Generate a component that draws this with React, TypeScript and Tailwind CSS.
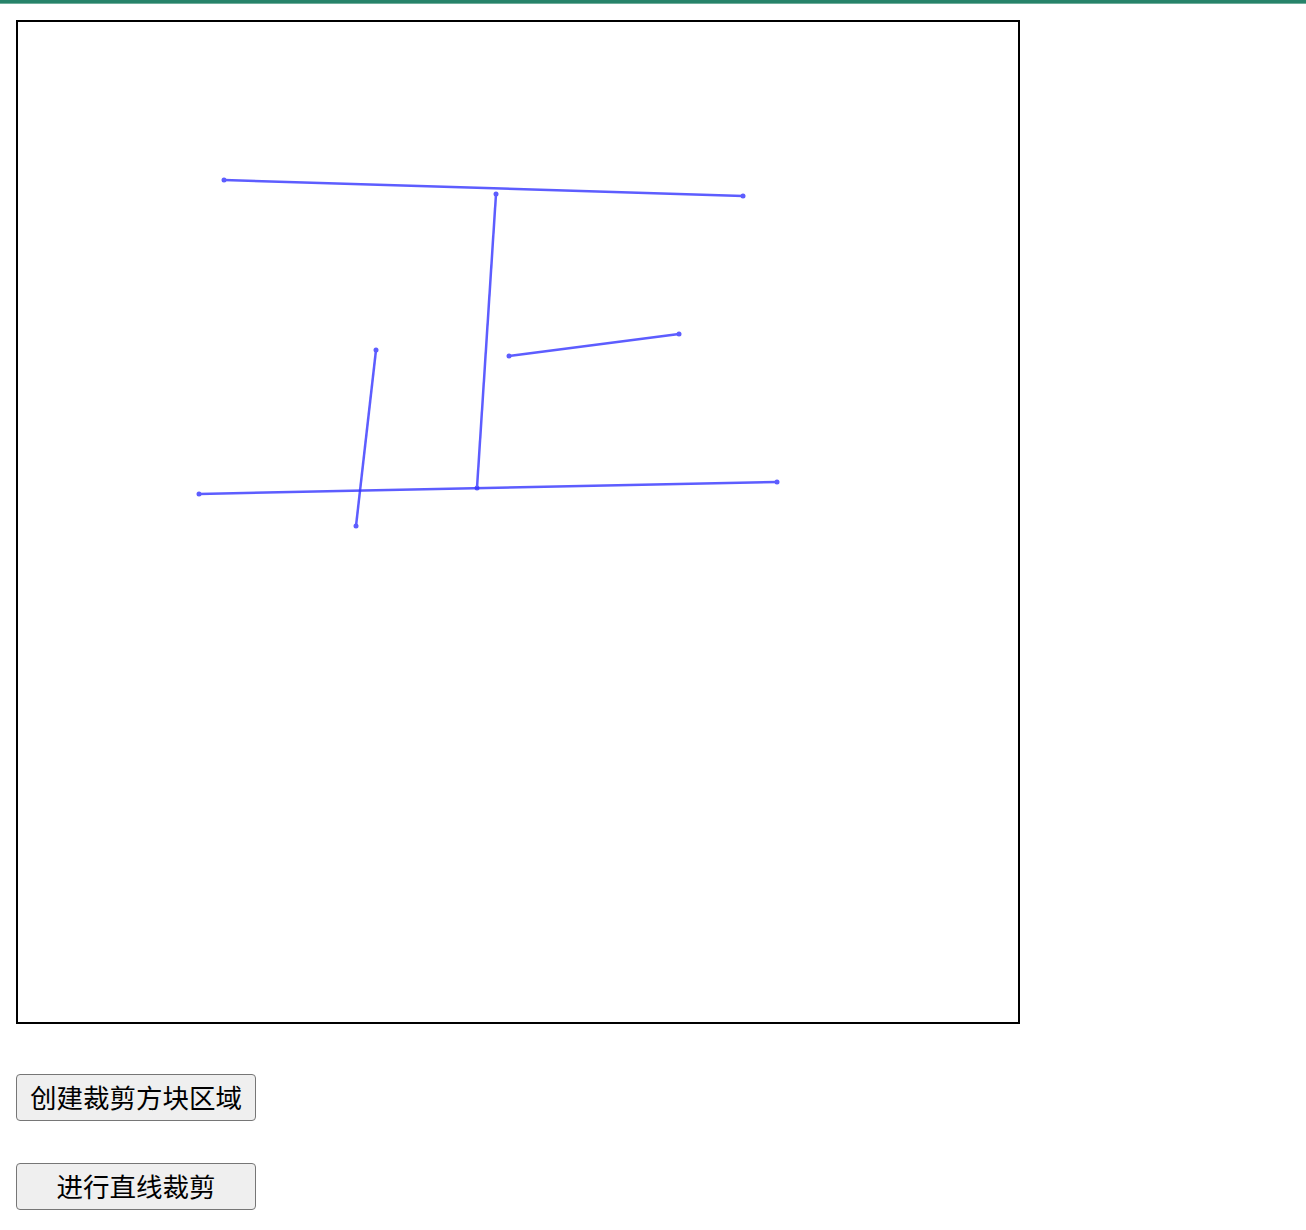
const lines: [number, number, number, number][] = [
  [206, 158, 725, 174],
  [478, 172, 459, 466],
  [491, 334, 661, 312],
  [358, 328, 338, 504],
  [181, 472, 759, 460],
];

export default function App() {
  return (
    <div className="min-h-[1230px] bg-white font-['Noto_Sans_CJK_SC',sans-serif]">
      <div className="h-[3px] bg-[#27836a]" />
      <div className="h-px bg-[#6fae9b]" />
      <div className="px-4 pt-4">
        <div className="h-[1004px] w-[1004px] border-2 border-black">
          <svg width="1000" height="1000" viewBox="0 0 1000 1000">
            {lines.map(([x1, y1, x2, y2], i) => (
              <g key={i} fill="#3535ff" stroke="#3535ff" opacity="0.8">
                <line x1={x1} y1={y1} x2={x2} y2={y2} strokeWidth="2.5" />
                <circle cx={x1} cy={y1} r="2.5" stroke="none" />
                <circle cx={x2} cy={y2} r="2.5" stroke="none" />
              </g>
            ))}
          </svg>
        </div>
        <div className="mt-[50px] flex flex-col gap-[42px]">
          <button className="flex h-[47px] w-[240px] items-center justify-center rounded-[4px] border border-[#767676] bg-[#efefef] text-[26.5px] leading-none text-black">
            创建裁剪方块区域
          </button>
          <button className="flex h-[47px] w-[240px] items-center justify-center rounded-[4px] border border-[#767676] bg-[#efefef] text-[26.5px] leading-none text-black">
            进行直线裁剪
          </button>
        </div>
      </div>
    </div>
  );
}
